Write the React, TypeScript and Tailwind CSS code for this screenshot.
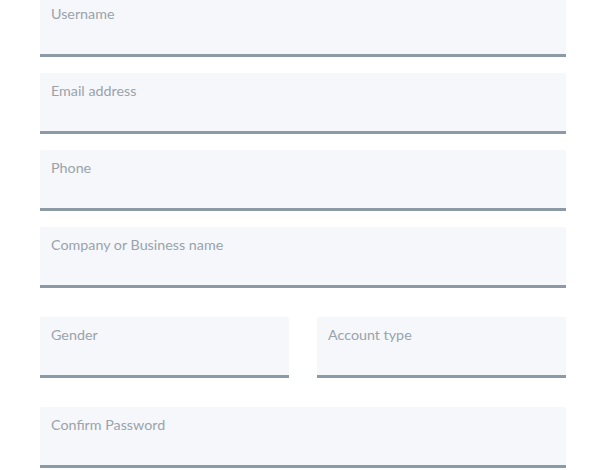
import React from 'react'

type FieldProps = {
  label: string
}

function Field({ label }: FieldProps) {
  return (
    <label className="block h-[61px] bg-[#f5f7fa] border-b-[3px] border-[#8b9aa5] rounded-t-[2px] px-[11px] pt-[8px]">
      <span className="block text-[14.3px] leading-[20px] text-[#9aa3ab]">
        {label}
      </span>
    </label>
  )
}

export default function App() {
  return (
    <div
      className="min-h-screen bg-white pl-[40px] pr-[24px] pb-4"
      style={{ fontFamily: 'Lato, "Open Sans", sans-serif' }}
    >
      <div className="-mt-[4px] flex flex-col">
        <div className="flex flex-col gap-[16px]">
          <Field label="Username" />
          <Field label="Email address" />
          <Field label="Phone" />
          <Field label="Company or Business name" />
        </div>

        <div className="mt-[29px] grid grid-cols-2 gap-x-[28px]">
          <Field label="Gender" />
          <Field label="Account type" />
        </div>

        <div className="mt-[29px]">
          <Field label="Confirm Password" />
        </div>
      </div>
    </div>
  )
}
